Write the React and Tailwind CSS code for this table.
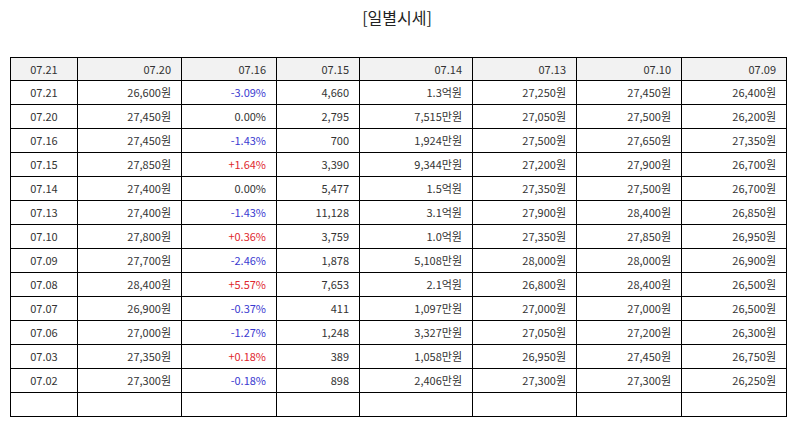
import React from 'react';

const head = ['07.21', '07.20', '07.16', '07.15', '07.14', '07.13', '07.10', '07.09'];
const widths = ['w-[67px]', 'w-[104px]', 'w-[95px]', 'w-[83px]', 'w-[113px]', 'w-[104px]', 'w-[105px]', 'w-[105px]'];

const rows = [
  ['07.21', '26,600원', '-3.09%', '4,660', '1.3억원', '27,250원', '27,450원', '26,400원'],
  ['07.20', '27,450원', '0.00%', '2,795', '7,515만원', '27,050원', '27,500원', '26,200원'],
  ['07.16', '27,450원', '-1.43%', '700', '1,924만원', '27,500원', '27,650원', '27,350원'],
  ['07.15', '27,850원', '+1.64%', '3,390', '9,344만원', '27,200원', '27,900원', '26,700원'],
  ['07.14', '27,400원', '0.00%', '5,477', '1.5억원', '27,350원', '27,500원', '26,700원'],
  ['07.13', '27,400원', '-1.43%', '11,128', '3.1억원', '27,900원', '28,400원', '26,850원'],
  ['07.10', '27,800원', '+0.36%', '3,759', '1.0억원', '27,350원', '27,850원', '26,950원'],
  ['07.09', '27,700원', '-2.46%', '1,878', '5,108만원', '28,000원', '28,000원', '26,900원'],
  ['07.08', '28,400원', '+5.57%', '7,653', '2.1억원', '26,800원', '28,400원', '26,500원'],
  ['07.07', '26,900원', '-0.37%', '411', '1,097만원', '27,000원', '27,000원', '26,500원'],
  ['07.06', '27,000원', '-1.27%', '1,248', '3,327만원', '27,050원', '27,200원', '26,300원'],
  ['07.03', '27,350원', '+0.18%', '389', '1,058만원', '26,950원', '27,450원', '26,750원'],
  ['07.02', '27,300원', '-0.18%', '898', '2,406만원', '27,300원', '27,300원', '26,250원'],
];

function rateColor(v) {
  if (v.startsWith('+')) return 'text-[#e0282e]';
  if (v.startsWith('-')) return 'text-[#3a3ad0]';
  return '';
}

export default function App() {
  return (
    <div className="w-[794px] h-[425px] bg-white text-[#333] font-['Noto_Sans_CJK_KR','Noto_Sans',sans-serif]">
      <h1 className="pt-[6px] h-[57px] text-center text-[16px] leading-[22px] text-[#222]">[일별시세]</h1>
      <table className="ml-[10px] w-[776px] table-fixed border-collapse text-[11px]">
        <colgroup>
          {widths.map((w, i) => (
            <col key={i} className={w} />
          ))}
        </colgroup>
        <thead>
          <tr className="h-[23px] bg-[#f2f2f2]">
            {head.map((h, i) => (
              <th key={i} className={`border border-black font-normal p-0 ${i === 0 ? 'text-center' : 'text-right pr-[10px]'}`}>
                {h}
              </th>
            ))}
          </tr>
        </thead>
        <tbody>
          {rows.map((r, ri) => (
            <tr key={ri} className="h-[24px]">
              {r.map((c, ci) => (
                <td
                  key={ci}
                  className={`border border-black p-0 ${ci === 0 ? 'text-center' : 'text-right pr-[10px]'} ${ci === 2 ? rateColor(c) : ''}`}
                >
                  {c}
                </td>
              ))}
            </tr>
          ))}
          <tr className="h-[24px]">
            {head.map((_, i) => (
              <td key={i} className="border border-black p-0"></td>
            ))}
          </tr>
        </tbody>
      </table>
    </div>
  );
}
